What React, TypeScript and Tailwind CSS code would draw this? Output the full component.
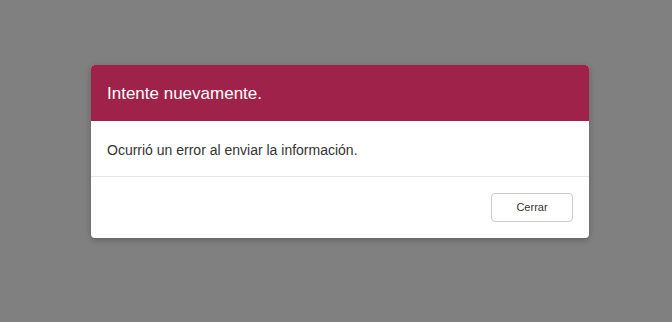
export default function App() {
  return (
    <div className="min-h-[322px] w-full bg-[#808080] pt-[65px] pl-[91px] font-['Liberation_Sans',Arial,sans-serif]">
      <div className="w-[498px] overflow-hidden rounded-[4px] bg-white shadow-[0_2px_6px_rgba(0,0,0,0.25)]">
        <div className="flex h-[56px] items-center bg-[#9e2249] px-4 pt-[2px]">
          <h4 className="text-[17px] text-white">Intente nuevamente.</h4>
        </div>
        <div className="flex h-[56px] items-center border-b border-[#e5e5e5] px-4 pt-[3px]">
          <p className="text-[14px] text-[#333]">Ocurrió un error al enviar la información.</p>
        </div>
        <div className="flex h-[61px] items-start justify-end px-4 pt-4">
          <button className="h-[29px] w-[82px] rounded-[4px] border border-[#ccc] bg-white text-[11px] text-[#333]">
            Cerrar
          </button>
        </div>
      </div>
    </div>
  );
}
